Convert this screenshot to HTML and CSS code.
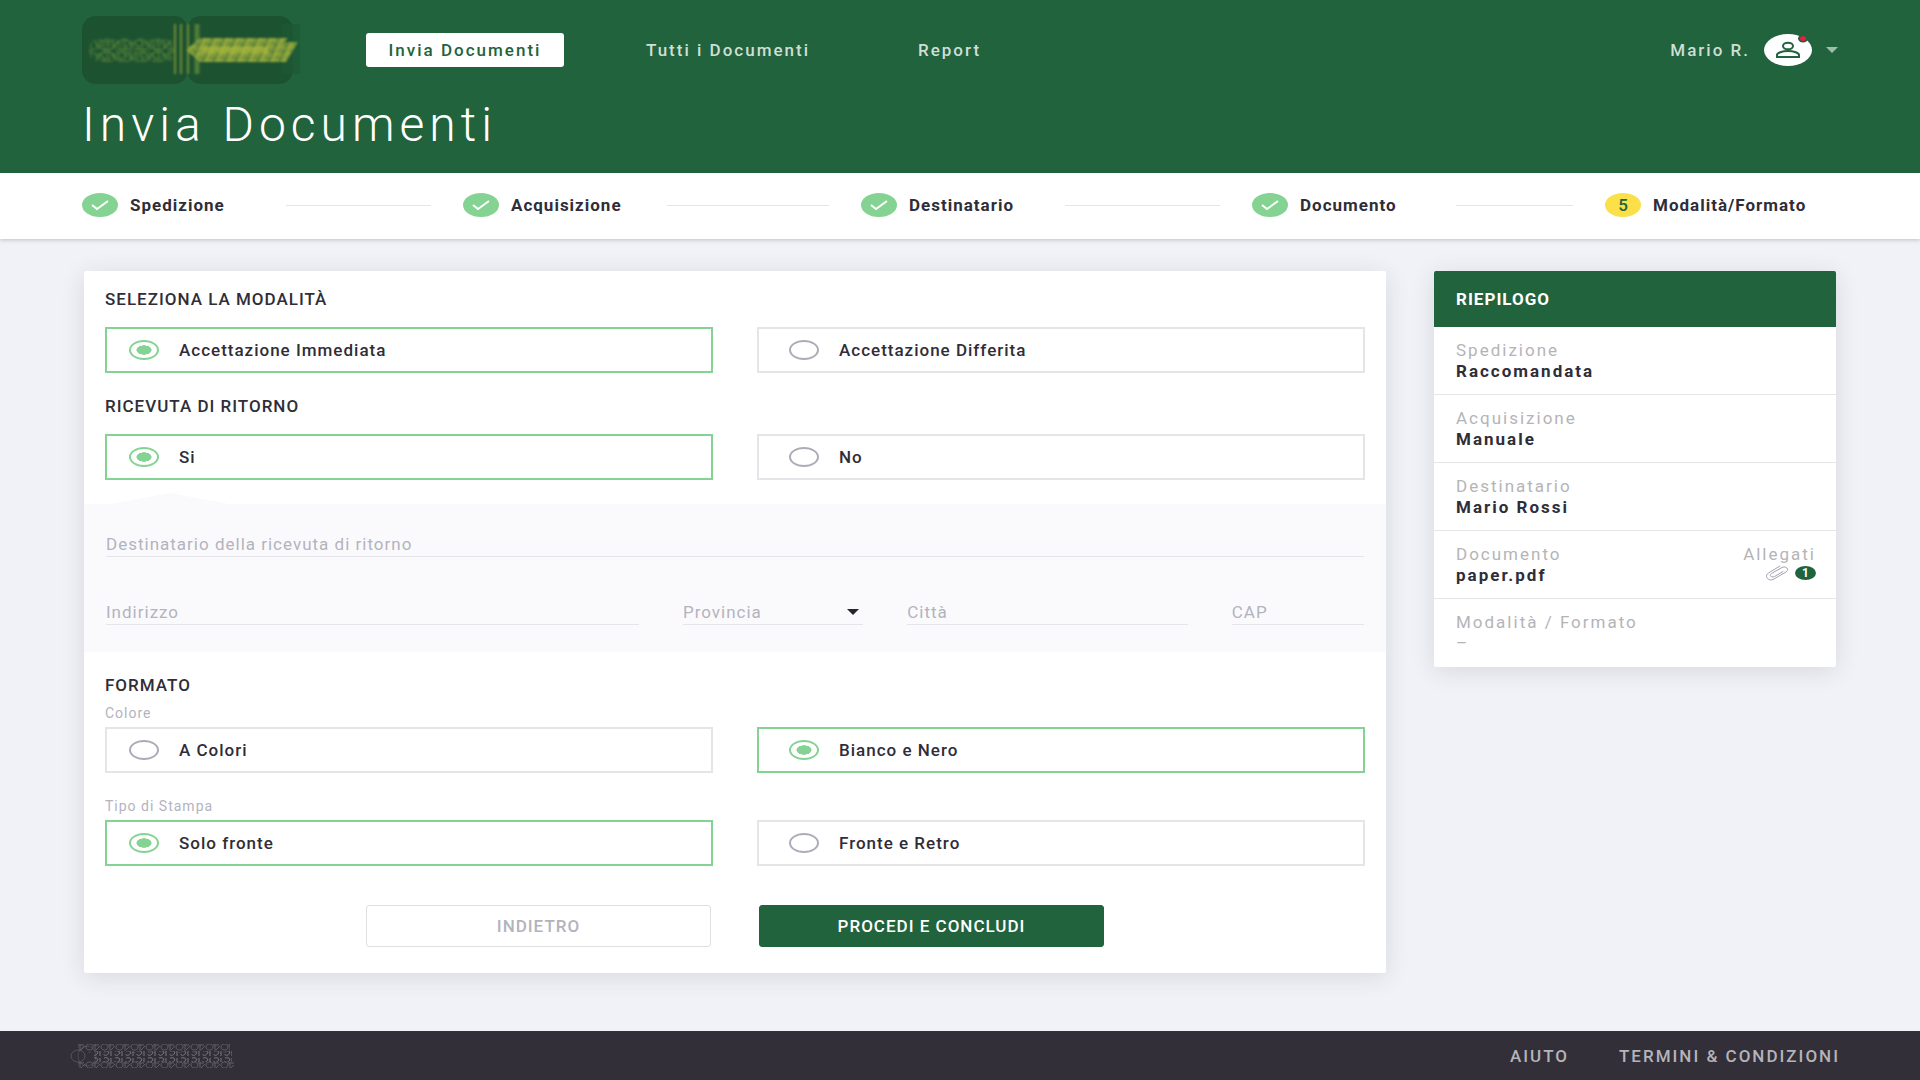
FILE: index.html
```html
<!DOCTYPE html>
<html lang="it">
<head>
<meta charset="utf-8">
<meta name="viewport" content="width=device-width, initial-scale=1">
<title>Invia Documenti</title>
<link rel="stylesheet" href="styles.css">
</head>
<body>
<header class="header">
  <div class="topbar">
    <a class="logo" href="#" aria-label="Home">
      <svg width="222" height="70" viewBox="0 0 222 70" aria-hidden="true">
        <defs>
          <pattern id="loops" width="17" height="12" patternUnits="userSpaceOnUse">
            <ellipse cx="8" cy="6" rx="8" ry="5" fill="none" stroke="#5f8a3a"/>
            <path d="M1 2l5 8M9 1v10M13 3l3 6" stroke="#5f8a3a" fill="none"/>
          </pattern>
          <pattern id="loops-offset" width="13" height="8" patternUnits="userSpaceOnUse">
            <path d="M1 4c0-4 8-4 8 0s-8 4-8 0M11 1v6" stroke="#5f8a3a" fill="none"/>
          </pattern>
          <pattern id="dashes" width="11" height="7" patternUnits="userSpaceOnUse" patternTransform="skewX(-24)">
            <rect width="11" height="7" fill="#75943a"/>
            <path d="M2 0v7M0 4h7" stroke="#97a93a" stroke-width="2"/>
            <path d="M9 0v4" stroke="#557f38" stroke-width="2"/>
          </pattern>
          <filter id="soft"><feGaussianBlur stdDeviation="1"/></filter>
        </defs>
        <rect y="1" width="106" height="68" rx="14" fill="#1d5231"/>
        <rect x="105" y="1" width="106" height="68" rx="14" fill="#1d5231"/>
        <rect x="200" y="9" width="18" height="50" fill="#1e5834" opacity=".7"/>
        <g filter="url(#soft)">
          <rect x="7" y="23" width="85" height="24" rx="11" fill="url(#loops)" opacity=".8"/>
          <rect x="15" y="24" width="78" height="22" fill="url(#loops-offset)" opacity=".7"/>
          <path d="M93 9v50M99 9v50M106 9v50" stroke="#6c8b35" stroke-width="2"/>
          <path d="M115 9v50" stroke="#4f7b38" stroke-width="5"/>
          <path d="M104 35l14-12h88l-4 4h14l-12 20h-86z" fill="url(#dashes)"/>
          <path d="M120 35h66" stroke="#b1bd3b" stroke-width="6" opacity=".6"/>
        </g>
      </svg>
    </a>
    <nav class="nav" aria-label="Principale">
      <a class="nav-link nav-link-active" href="#" aria-current="page">Invia Documenti</a>
      <a class="nav-link" href="#">Tutti i Documenti</a>
      <a class="nav-link" href="#">Report</a>
    </nav>
    <button class="user" type="button">
      <span>Mario R.</span>
      <svg width="48" height="32" viewBox="0 0 48 32" aria-hidden="true">
        <ellipse cx="24" cy="16" rx="24" ry="16" fill="#fff"/>
        <g fill="none" stroke="#21633c" stroke-width="2">
          <ellipse cx="24" cy="12" rx="5" ry="3.3"/>
          <path d="M13 23v-2c0-2 5-4 11-4s11 2 11 4v2z"/>
        </g>
        <ellipse cx="39" cy="4.500" rx="5" ry="4" fill="#21633c"/>
        <ellipse cx="39" cy="4.500" rx="3" ry="2.300" fill="#f5183f"/>
      </svg>
      <svg width="12" height="6" viewBox="0 0 12 6" aria-hidden="true"><path d="M0 0h12l-6 6z" fill="#9dbfa9"/></svg>
    </button>
  </div>
  <h1 class="title">Invia Documenti</h1>
</header>

<ol class="steps">
  <li class="step">
    <svg class="step-icon" viewBox="0 0 36 24" aria-hidden="true"><ellipse cx="18" cy="12" rx="18" ry="12" fill="#84d393"/><path d="M10 12l5 4 11-8" fill="none" stroke="#fff" stroke-width="2"/></svg>
    <span class="step-label">Spedizione</span><span class="step-line"></span>
  </li>
  <li class="step">
    <svg class="step-icon" viewBox="0 0 36 24" aria-hidden="true"><ellipse cx="18" cy="12" rx="18" ry="12" fill="#84d393"/><path d="M10 12l5 4 11-8" fill="none" stroke="#fff" stroke-width="2"/></svg>
    <span class="step-label">Acquisizione</span><span class="step-line"></span>
  </li>
  <li class="step">
    <svg class="step-icon" viewBox="0 0 36 24" aria-hidden="true"><ellipse cx="18" cy="12" rx="18" ry="12" fill="#84d393"/><path d="M10 12l5 4 11-8" fill="none" stroke="#fff" stroke-width="2"/></svg>
    <span class="step-label">Destinatario</span><span class="step-line"></span>
  </li>
  <li class="step">
    <svg class="step-icon" viewBox="0 0 36 24" aria-hidden="true"><ellipse cx="18" cy="12" rx="18" ry="12" fill="#84d393"/><path d="M10 12l5 4 11-8" fill="none" stroke="#fff" stroke-width="2"/></svg>
    <span class="step-label">Documento</span><span class="step-line"></span>
  </li>
  <li class="step" aria-current="step">
    <span class="step-icon step-number">5</span>
    <span class="step-label">Modalità/Formato</span>
  </li>
</ol>

<main class="main">
  <form class="card">
    <section class="section">
      <h2 class="heading" id="modalita">Seleziona la modalità</h2>
      <div class="options" role="radiogroup" aria-labelledby="modalita">
        <label class="option"><input class="radio" type="radio" name="modalita" checked>Accettazione Immediata</label>
        <label class="option"><input class="radio" type="radio" name="modalita">Accettazione Differita</label>
      </div>
      <h2 class="heading" id="ricevuta">Ricevuta di ritorno</h2>
      <div class="options" role="radiogroup" aria-labelledby="ricevuta">
        <label class="option"><input class="radio" type="radio" name="ricevuta" checked>Si</label>
        <label class="option"><input class="radio" type="radio" name="ricevuta">No</label>
      </div>
    </section>

    <section class="address">
      <input class="field" type="text" aria-label="Destinatario della ricevuta di ritorno" placeholder="Destinatario della ricevuta di ritorno">
      <div class="address-row">
        <input class="field" type="text" aria-label="Indirizzo" placeholder="Indirizzo">
        <div class="select">
          <select class="field" aria-label="Provincia"><option>Provincia</option></select>
          <svg class="select-caret" width="12" height="6" viewBox="0 0 12 6" aria-hidden="true"><path d="M0 0h12l-6 6z" fill="#26252d"/></svg>
        </div>
        <input class="field" type="text" aria-label="Città" placeholder="Città">
        <input class="field" type="text" aria-label="CAP" placeholder="CAP">
      </div>
    </section>

    <section class="section">
      <h2 class="heading heading-format">Formato</h2>
      <h3 class="caption" id="colore">Colore</h3>
      <div class="options" role="radiogroup" aria-labelledby="colore">
        <label class="option"><input class="radio" type="radio" name="colore">A Colori</label>
        <label class="option"><input class="radio" type="radio" name="colore" checked>Bianco e Nero</label>
      </div>
      <h3 class="caption caption-next" id="stampa">Tipo di Stampa</h3>
      <div class="options" role="radiogroup" aria-labelledby="stampa">
        <label class="option"><input class="radio" type="radio" name="stampa" checked>Solo fronte</label>
        <label class="option"><input class="radio" type="radio" name="stampa">Fronte e Retro</label>
      </div>
    </section>

    <div class="actions">
      <button class="button" type="button">Indietro</button>
      <button class="button button-primary" type="submit">Procedi e concludi</button>
    </div>
  </form>

  <aside class="summary">
    <h2 class="summary-title">Riepilogo</h2>
    <dl class="summary-list">
      <div class="summary-row"><div><dt>Spedizione</dt><dd>Raccomandata</dd></div></div>
      <div class="summary-row"><div><dt>Acquisizione</dt><dd>Manuale</dd></div></div>
      <div class="summary-row"><div><dt>Destinatario</dt><dd>Mario Rossi</dd></div></div>
      <div class="summary-row">
        <div><dt>Documento</dt><dd>paper.pdf</dd></div>
        <div>
          <dt>Allegati</dt>
          <dd class="attachments">
            <svg width="24" height="16" viewBox="0 0 24 16" fill="none" stroke="#a2a2b0" stroke-linecap="round" aria-hidden="true"><path d="M15 1L3.500 8C-1 11 3 16.500 8 14.500l13-7.500c4-2.500 0-6.500-4-4.500L6.500 8.500c-3 2 0 4.500 3 3L18 6.500"/></svg>
            <span class="count">1</span>
          </dd>
        </div>
      </div>
      <div class="summary-row"><div><dt>Modalità / Formato</dt><dd class="empty">–</dd></div></div>
    </dl>
  </aside>
</main>

<footer class="footer">
  <svg class="footer-mark" width="166" height="26" viewBox="0 0 166 26" aria-hidden="true">
    <defs>
      <pattern id="marks" width="15" height="9" patternUnits="userSpaceOnUse">
        <path d="M1 4c0-4 7-4 7 0s-7 4-7 0M10 1v7M8 2h6M11 7l4-4" fill="none" stroke="#716f77"/>
      </pattern>
      <pattern id="marks-low" width="11" height="7" patternUnits="userSpaceOnUse">
        <path d="M1 1c4-1 6 1 4 3s-4 2-4 0M8 1v5" fill="none" stroke="#77757d"/>
      </pattern>
    </defs>
    <ellipse cx="8" cy="13" rx="7" ry="6" fill="none" stroke="#55535b"/>
    <ellipse cx="17" cy="13" rx="9" ry="10" fill="none" stroke="#4b4951"/>
    <rect x="8" y="1" width="152" height="9" fill="url(#marks)" opacity=".7"/>
    <rect x="24" y="8" width="138" height="11" fill="url(#marks-low)"/>
    <rect x="8" y="17" width="156" height="8" fill="url(#marks)" opacity=".7"/>
  </svg>
  <nav class="footer-links" aria-label="Supporto">
    <a href="#">Aiuto</a>
    <a href="#">Termini &amp; Condizioni</a>
  </nav>
</footer>
</body>
</html>
```
FILE: styles.css
```css
:root {
  --green: #21633c;
  --mint: #84d393;
  --ink: #2f2d38;
  --muted: #b3b3be;
  --line: #e5e5e9;
}

* { box-sizing: border-box; }

body {
  margin: 0;
  min-height: 100vh;
  display: flex;
  flex-direction: column;
  background: #f0f2f7;
  color: var(--ink);
  font: 500 17px/20px Roboto, "Liberation Sans", sans-serif;
  letter-spacing: 1px;
}

h1, h2, h3, ol, dl, dd { margin: 0; padding: 0; }
a { color: inherit; text-decoration: none; }
button, input, select { font: inherit; letter-spacing: inherit; }

/* Header */
.header {
  padding: 15px 82px 22px;
  background: var(--green);
  color: #fff;
}

.topbar {
  display: flex;
  align-items: center;
  height: 70px;
}

.logo {
  display: flex;
  margin-right: 62px;
}

.nav {
  display: grid;
  grid-template-columns: 198px 190px 100px;
  column-gap: 82px;
  align-items: center;
}

.nav-link {
  color: #cfdfd5;
  letter-spacing: 2px;
  white-space: nowrap;
}

.nav-link-active {
  padding: 7px 0;
  border-radius: 3px;
  background: #fff;
  color: var(--green);
  text-align: center;
}

.user {
  display: flex;
  align-items: center;
  gap: 14px;
  margin-left: auto;
  padding: 0;
  border: 0;
  background: none;
  color: #cfdfd5;
  letter-spacing: 2px;
}

.title {
  margin-top: 14px;
  font-size: 48px;
  font-weight: 300;
  line-height: 52px;
  letter-spacing: 5px;
}

/* Progress steps */
.steps {
  display: grid;
  grid-template-columns: 381fr 398fr 391fr 353fr 234fr;
  align-items: center;
  height: 66px;
  padding: 0 81px 2px 82px;
  background: #fff;
  box-shadow: 0 1px 4px rgba(47, 45, 56, .25);
  list-style: none;
}

.step {
  display: flex;
  align-items: center;
  gap: 12px;
  font-weight: 700;
}

.step-icon {
  flex: none;
  width: 36px;
  height: 24px;
}

.step-number {
  border-radius: 50%;
  background: #fbe04a;
  color: var(--green);
  font-weight: 500;
  line-height: 24px;
  letter-spacing: 0;
  text-align: center;
}

.step-label { min-width: 136px; }

.step-line {
  flex: 1;
  height: 1px;
  margin: 0 32px 0 8px;
  background: var(--line);
}

/* Page content */
.main {
  flex: 1;
  display: grid;
  grid-template-columns: 1302fr 402fr;
  column-gap: 48px;
  align-items: start;
  padding: 32px 84px 58px;
}

.card, .summary {
  border-radius: 2px;
  background: #fff;
  box-shadow: 0 4px 24px rgba(47, 45, 56, .12);
}

.card { padding-bottom: 26px; }

.section { padding: 0 21px; }

.heading {
  padding: 23px 0 18px;
  font-size: 17px;
  font-weight: 500;
  text-transform: uppercase;
}

.section:first-child .heading:first-child { padding-top: 18px; }
.heading-format { padding-bottom: 8px; }

.options {
  display: grid;
  grid-template-columns: 1fr 1fr;
  column-gap: 44px;
}

.option {
  display: flex;
  align-items: center;
  gap: 20px;
  height: 46px;
  padding: 0 22px;
  border: 2px solid var(--line);
}

.option:nth-child(2) { padding-left: 30px; }
.option:has(:checked) { border-color: var(--mint); }

.radio {
  appearance: none;
  width: 30px;
  height: 20px;
  margin: 0;
  border: 2px solid #acacb9;
  border-radius: 50%;
}

.radio:checked {
  border-color: var(--mint);
  background: radial-gradient(closest-side, var(--mint) 56%, transparent 60%);
}

/* Return receipt address, with a notch pointing at the chosen answer */
.address {
  position: relative;
  margin-top: 24px;
  padding: 27px 22px;
  background: #fafafc;
}

.address::before {
  content: "";
  position: absolute;
  bottom: 100%;
  left: 27px;
  width: 118px;
  height: 11px;
  background: #fafafc;
  clip-path: polygon(50% 0, 100% 100%, 0 100%);
}

.address-row {
  display: grid;
  grid-template-columns: 532fr 180fr 280fr 132fr;
  column-gap: 44px;
  margin-top: 42px;
}

.field {
  display: block;
  width: 100%;
  min-width: 0;
  height: 26px;
  padding: 0;
  appearance: none;
  border: 0;
  border-bottom: 1px solid var(--line);
  border-radius: 0;
  background: transparent;
  color: var(--muted);
  font-weight: 400;
}

.field::placeholder { color: var(--muted); }

.select {
  display: grid;
  align-items: center;
}

.select > * { grid-area: 1 / 1; }

.select-caret {
  justify-self: end;
  margin-right: 4px;
  pointer-events: none;
}

.caption {
  padding-bottom: 4px;
  color: var(--muted);
  font-size: 14px;
  font-weight: 400;
}

.caption-next { padding-top: 23px; }

.actions {
  display: grid;
  grid-template-columns: 345px 345px;
  justify-content: center;
  column-gap: 48px;
  margin-top: 39px;
}

.button {
  height: 42px;
  padding: 0;
  border: 1px solid #dedee3;
  border-radius: 3px;
  background: #fff;
  color: var(--muted);
  text-transform: uppercase;
}

.button-primary {
  border-color: var(--green);
  background: var(--green);
  color: #fff;
}

/* Summary */
.summary-title {
  padding: 18px 22px;
  border-radius: 2px 2px 0 0;
  background: var(--green);
  color: #fff;
  font-size: 17px;
  font-weight: 700;
}

.summary-title, .footer-links { text-transform: uppercase; }

.summary-row {
  display: flex;
  justify-content: space-between;
  height: 68px;
  padding: 13px 20px 0 22px;
  border-bottom: 1px solid var(--line);
  line-height: 21px;
  letter-spacing: 2px;
}

.summary-row:last-child { border-bottom: 0; }
.summary-row dt { color: #b4b4b8; font-weight: 400; }
.summary-row dd { font-weight: 700; }
.summary-row .empty { color: #b4b4b8; font-weight: 400; }

.attachments {
  display: flex;
  justify-content: flex-end;
  align-items: center;
  gap: 6px;
}

.count {
  width: 21px;
  height: 14px;
  border-radius: 50%;
  background: var(--green);
  color: #fff;
  font-size: 12px;
  line-height: 14px;
  letter-spacing: 0;
  text-align: center;
}

/* Footer */
.footer {
  display: flex;
  justify-content: space-between;
  align-items: center;
  height: 49px;
  padding: 0 80px 0 70px;
  background: #322f39;
  color: #b5b4b9;
}

.footer-links {
  display: flex;
  gap: 50px;
  letter-spacing: 2px;
}
```
